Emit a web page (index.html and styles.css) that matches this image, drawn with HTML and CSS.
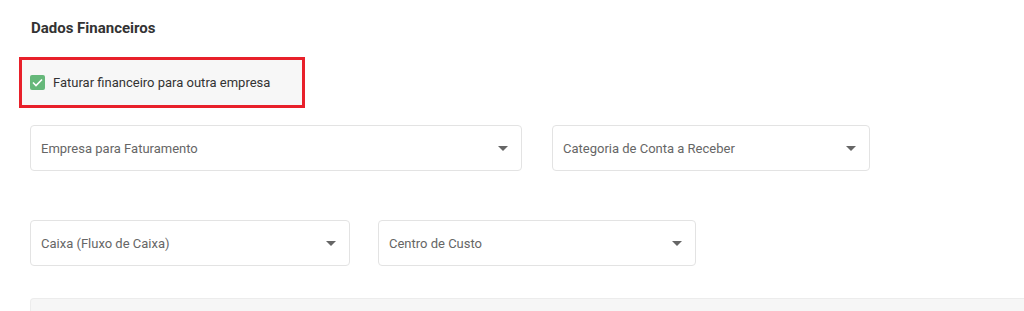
FILE: index.html
```html
<!DOCTYPE html>
<html lang="pt-br">
<head>
  <meta charset="UTF-8" />
  <meta name="viewport" content="width=device-width, initial-scale=1.0"/>
  <title>Dados Financeiros</title>
  <link rel="stylesheet" href="styles.css">
</head>
<body>

  <div class="secao">
    <h3 class="secao-titulo">Dados Financeiros</h3>

    <!-- Faturar para outra empresa -->
    <label class="destaque">
      <span class="check">
        <svg width="11" height="9" viewBox="0 0 11 9">
          <path d="M1 4.5 L4 7.5 L10 1.5" fill="none" stroke="#fff" stroke-width="1.6"/>
        </svg>
      </span>
      <span class="check-texto">Faturar financeiro para outra empresa</span>
    </label>

    <div class="linha linha-1">
      <div class="campo campo-grande">
        <span class="campo-texto">Empresa para Faturamento</span>
        <span class="seta"></span>
      </div>
      <div class="campo campo-medio">
        <span class="campo-texto">Categoria de Conta a Receber</span>
        <span class="seta"></span>
      </div>
    </div>

    <div class="linha linha-2">
      <div class="campo campo-caixa">
        <span class="campo-texto">Caixa (Fluxo de Caixa)</span>
        <span class="seta"></span>
      </div>
      <div class="campo campo-medio">
        <span class="campo-texto">Centro de Custo</span>
        <span class="seta"></span>
      </div>
    </div>

    <div class="area-cinza"></div>
  </div>

</body>
</html>
```

FILE: styles.css
```css
body {
  font-family: Roboto, Arial, sans-serif;
  background: #fff;
  margin: 0;
  overflow: hidden;
}

.secao {
  padding: 20px 0 0 30px;
}

.secao-titulo {
  font-size: 15px;
  font-weight: bold;
  line-height: 16px;
  color: #333;
  margin: 0 0 21px 1px;
}

.destaque {
  display: flex;
  align-items: center;
  box-sizing: border-box;
  width: 286px;
  height: 51px;
  margin-left: -11px;
  padding-left: 8px;
  border: 3px solid #e8202a;
  background: #f7f7f7;
}

.check {
  width: 15px;
  height: 15px;
  border-radius: 2px;
  background: #66b87a;
  display: flex;
  align-items: center;
  justify-content: center;
  margin-right: 8px;
  flex-shrink: 0;
}

.check-texto {
  font-size: 13px;
  color: #333;
}

.linha {
  display: flex;
  gap: 30px;
}

.linha-1 {
  margin-top: 17px;
}

.linha-2 {
  margin-top: 49px;
  gap: 28px;
}

.campo {
  height: 46px;
  box-sizing: border-box;
  border: 1px solid #e3e3e3;
  border-radius: 4px;
  background: #fff;
  display: flex;
  align-items: center;
  justify-content: space-between;
  padding: 1px 12px 0 10px;
}

.campo-grande {
  width: 492px;
}

.campo-medio {
  width: 318px;
}

.campo-caixa {
  width: 320px;
}

.campo-texto {
  font-size: 13px;
  color: #666;
}

.seta {
  width: 0;
  height: 0;
  border-left: 5px solid transparent;
  border-right: 5px solid transparent;
  border-top: 5px solid #666;
  margin-right: 1px;
}

.area-cinza {
  margin-top: 32px;
  height: 13px;
  margin-right: -10px;
  border: 1px solid #ececec;
  border-bottom: none;
  border-radius: 4px 4px 0 0;
  box-sizing: border-box;
  background: #f6f6f6;
}
```
